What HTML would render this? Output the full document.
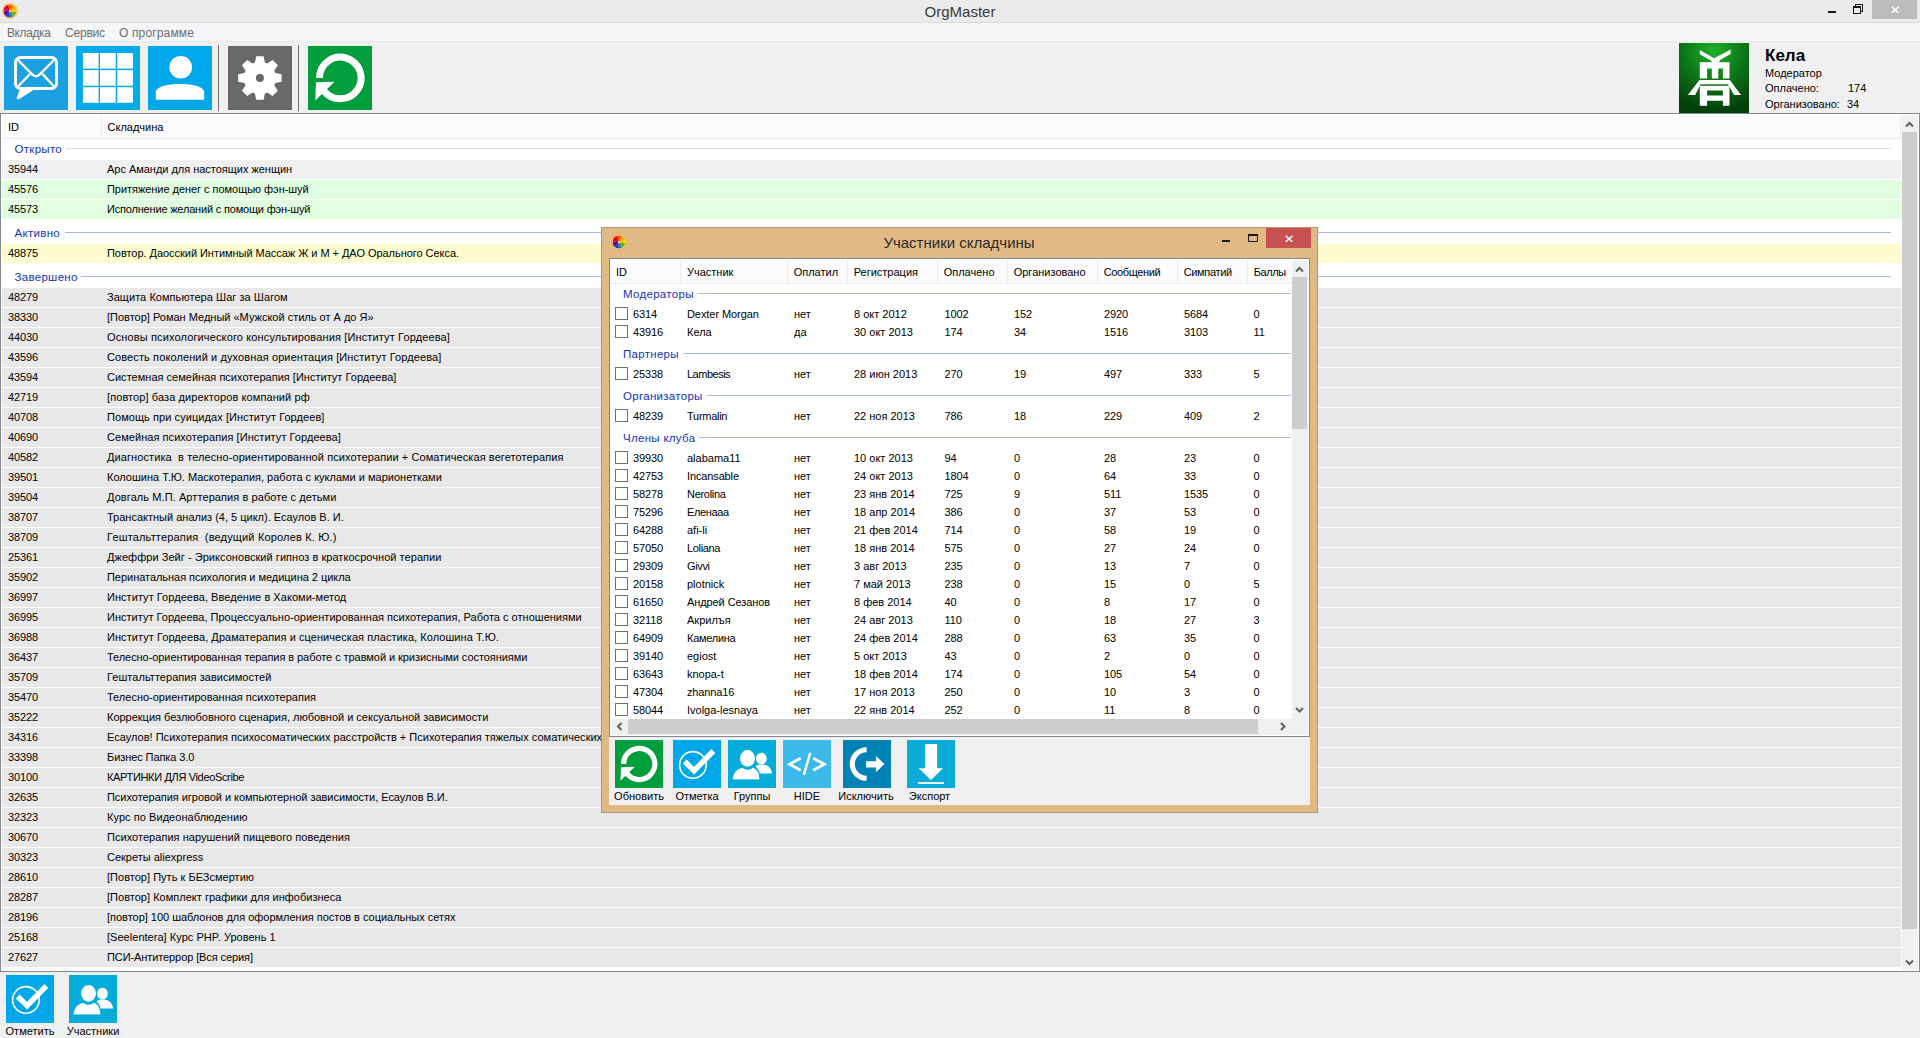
<!DOCTYPE html>
<html lang="ru"><head><meta charset="utf-8"><title>OrgMaster</title>
<style>
*{box-sizing:border-box;margin:0;padding:0}
html,body{width:1920px;height:1038px;overflow:hidden}
body{position:relative;background:#f0f0f0;font-family:"Liberation Sans",sans-serif;font-size:11px;color:#000;line-height:1}
div,span{position:absolute;white-space:pre}
svg.ic{position:absolute;left:0;top:0;display:block}
.tile{width:64px;height:64px}
.t48{width:48px;height:48px}
.lv{background:#fff;border:1px solid #828790;overflow:hidden}
.hd{background:#fcfcfc;border-bottom:1px solid #e3ebf6}
.hc{top:0;border-right:1px solid #e6edf8;line-height:23px;padding-top:1px}
.hc span{position:static}
.gl{color:#1233b8;line-height:14px;font-size:11.5px;letter-spacing:0.3px}
.gln{height:1px;background:#a9b9e0}
.r{left:1px;height:19px;line-height:19px}
.r span{top:0}
.n{letter-spacing:-0.12px}
.dr{left:1px;height:18px;line-height:18px}
.dr span{top:1px}
.cb{left:4px;top:3px;width:13px;height:13px;border:1px solid #707070;background:#fff}
.sb{background:#f0f0f0}
.th{background:#cdcdcd}
.lbl{line-height:13px;text-align:center}
</style></head>
<body>
<div id="titlebar" style="left:0;top:0;width:1920px;height:22px;background:#ebebeb"></div>
<div style="left:0;top:22px;width:1920px;height:1px;background:#dadada"></div>
<div style="left:2px;top:3px;width:16px;height:16px"><svg class="ic" width="16" height="16" viewBox="0 0 16 16"><circle cx="8" cy="8" r="7.7" fill="#fbab2a"/><circle cx="8" cy="8" r="6.9" fill="#fde6b0"/><path d="M8 8 L1.62 7.44 A6.4 6.4 0 0 1 6.34 1.82Z" fill="#e3051b"/><path d="M8 8 L6.34 1.82 A6.4 6.4 0 0 1 11.20 2.46Z" fill="#ff5a12"/><path d="M8 8 L11.20 2.46 A6.4 6.4 0 0 1 13.80 5.30Z" fill="#ffa200"/><path d="M8 8 L13.80 5.30 A6.4 6.4 0 0 1 14.26 9.33Z" fill="#f9d000"/><path d="M8 8 L14.26 9.33 A6.4 6.4 0 0 1 11.00 13.65Z" fill="#6fb21f"/><path d="M8 8 L11.00 13.65 A6.4 6.4 0 0 1 6.89 14.30Z" fill="#2f6fc4"/><path d="M8 8 L6.89 14.30 A6.4 6.4 0 0 1 3.89 12.90Z" fill="#0b44c6"/><path d="M8 8 L3.89 12.90 A6.4 6.4 0 0 1 1.62 7.44Z" fill="#5c0a98"/><circle cx="7.9" cy="8.2" r="1" fill="#fff6d0"/></svg></div>
<div id="title" style="left:860px;top:0;width:200px;height:22px;line-height:23px;text-align:center;font-size:15px;color:#3a3a3a">OrgMaster</div>
<div style="left:1828px;top:11px;width:8px;height:2px;background:#1a1a1a"></div>
<svg class="ic" style="left:1852px;top:3px" width="12" height="12" viewBox="0 0 12 12" fill="none" stroke="#1a1a1a" shape-rendering="crispEdges"><path d="M3.5 3 V1.5 H10.5 V8.5 H9" stroke-width="1"/><path d="M1.5 4 H8.5 V10.5 H1.5Z" stroke-width="1"/><path d="M1 4 H9" stroke-width="2"/></svg>
<div style="left:1872px;top:0;width:45px;height:19px;background:#bcbcbc"></div>
<svg class="ic" style="left:1890.6px;top:5.6px" width="8.4" height="7.8" viewBox="0 0 9 9" preserveAspectRatio="none"><path d="M0.8 0.8 L8.2 8.2 M8.2 0.8 L0.8 8.2" stroke="#fff" stroke-width="1.7"/></svg>
<div id="menubar" style="left:0;top:23px;width:1920px;height:18px;background:#f5f6f7"></div>
<div style="left:0;top:41px;width:1920px;height:1px;background:#e8e9ea"></div>
<div class="mi" style="left:7px;top:24px;line-height:18px;font-size:12px;letter-spacing:-0.40px;color:#6d6d6d">Вкладка</div>
<div class="mi" style="left:65px;top:24px;line-height:18px;font-size:12px;letter-spacing:-0.20px;color:#6d6d6d">Сервис</div>
<div class="mi" style="left:119px;top:24px;line-height:18px;font-size:12px;letter-spacing:0.15px;color:#6d6d6d">О программе</div>
<div class="tile" style="left:4px;top:46px;background:#1ba1e2"><svg class="ic" width="64" height="64" viewBox="0 0 64 64" fill="none" stroke="#fff" stroke-width="2.9" stroke-linejoin="round"><rect x="11.5" y="11.5" width="41" height="31" rx="5" ry="5"/><path d="M13.5 13.5 L28.5 28.6 Q32 32 35.5 28.6 L50.5 13.5" stroke-width="2.4"/><path d="M13.5 41 L26 28 M50.5 41 L38.5 28" stroke-width="2.4"/><path d="M16.5 43 L13.2 52 Q13 53.5 14.8 52.8 L29.5 43.5Z" fill="#fff" stroke-width="1"/></svg></div>
<div class="tile" style="left:76px;top:46px;background:#00aaeb"><svg class="ic" width="64" height="64" viewBox="0 0 64 64" fill="#fff"><rect x="6.9" y="7.0" width="15.7" height="15.6"/><rect x="24.0" y="7.0" width="15.7" height="15.6"/><rect x="41.2" y="7.0" width="15.7" height="15.6"/><rect x="6.9" y="24.1" width="15.7" height="15.6"/><rect x="24.0" y="24.1" width="15.7" height="15.6"/><rect x="41.2" y="24.1" width="15.7" height="15.6"/><rect x="6.9" y="41.2" width="15.7" height="15.6"/><rect x="24.0" y="41.2" width="15.7" height="15.6"/><rect x="41.2" y="41.2" width="15.7" height="15.6"/></svg></div>
<div class="tile" style="left:148px;top:46px;background:#00a8ea"><svg class="ic" width="64" height="64" viewBox="0 0 64 64" fill="#fff"><circle cx="32.7" cy="21.3" r="11.3"/><path d="M7.8 53.8 L7.8 45.5 C9 40.5 20 38.1 32 38.1 C44 38.1 55 40.5 56.2 45.5 L56.2 53.8Z"/></svg></div>
<div class="tile" style="left:228px;top:46px;background:#696969"><svg class="ic" width="64" height="64" viewBox="0 0 64 64"><path fill="#fff" fill-rule="evenodd" d="M26.96 16.57 L28.18 10.32 L35.62 10.32 L36.84 16.57 L39.31 17.60 L44.60 14.04 L49.86 19.30 L46.30 24.59 L47.33 27.06 L53.58 28.28 L53.58 35.72 L47.33 36.94 L46.30 39.41 L49.86 44.70 L44.60 49.96 L39.31 46.40 L36.84 47.43 L35.62 53.68 L28.18 53.68 L26.96 47.43 L24.49 46.40 L19.20 49.96 L13.94 44.70 L17.50 39.41 L16.47 36.94 L10.22 35.72 L10.22 28.28 L16.47 27.06 L17.50 24.59 L13.94 19.30 L19.20 14.04 L24.49 17.60Z M27.90 32.00 a4.00 4.00 0 1 0 8.00 0 a4.00 4.00 0 1 0 -8.00 0Z"/></svg></div>
<div class="tile" style="left:308px;top:46px;background:#009e3c"><svg class="ic" width="64" height="64" viewBox="0 0 64 64"><path d="M11.50 32.00 A20.80 20.80 0 1 1 16.02 44.95" fill="none" stroke="#fff" stroke-width="7"/><path d="M8 36.2 L26.5 35.8 L7.3 54.4Z" fill="#fff"/></svg></div>
<div style="left:218px;top:45px;width:1px;height:66px;background:#6e6e6e"></div>
<div style="left:298px;top:45px;width:1px;height:66px;background:#6e6e6e"></div>
<div style="left:1679px;top:43px;width:70px;height:70px"><svg class="ic" width="70" height="70" viewBox="0 0 70 70"><defs><radialGradient id="ag" cx="50%" cy="12%" r="85%"><stop offset="0" stop-color="#1eb02a"/><stop offset="0.45" stop-color="#0d7d1a"/><stop offset="1" stop-color="#04400b"/></radialGradient></defs><rect width="70" height="70" fill="url(#ag)"/><g fill="#fff"><path d="M20.8 6.9 L35 15.2 L51.6 6.6 L51.6 11 L40.5 17.2 L40.5 19.3 L50.5 19.3 L50.5 35.5 L43.9 35.5 L43.9 25.4 L39.3 25.4 L39.3 35.5 L32.8 35.5 L32.8 25.4 L28.1 25.4 L28.1 35.5 L20.8 35.5 L20.8 19.3 L32.6 19.3 L32.6 18 L20.8 11.2Z"/><path d="M20.4 37 L50.9 37 L62 52 L55.1 52 L49 41.2 L21.6 41.2 L16.2 52 L8.9 52Z"/><path fill-rule="evenodd" d="M20.8 42.8 H50.5 V62.8 H43.9 V57.8 H28.1 V62.8 H20.8Z M28.1 47.4 H43.9 V52.4 H28.1Z"/></g></svg></div>
<div id="uname" style="left:1765px;top:46px;font-size:17px;font-weight:bold;line-height:20px">Кела</div>
<div style="left:1765px;top:67px;line-height:13px">Модератор</div>
<div style="left:1765px;top:82px;line-height:13px">Оплачено:</div><div style="left:1848px;top:82px;line-height:13px">174</div>
<div style="left:1765px;top:98px;line-height:13px">Организовано:</div><div style="left:1847px;top:98px;line-height:13px">34</div>
<div id="mlist" class="lv" style="left:0;top:113px;width:1920px;height:859px">
<div class="hd" style="left:1px;top:1px;width:1899px;height:24px"><div class="hc" style="left:0;width:100px;height:23px;padding-left:6px">ID</div><div class="hc" style="left:100px;width:1799px;height:23px;padding-left:5.5px">Складчина</div></div>
<div class="gl" style="left:13.5px;top:27.5px">Открыто</div><div class="gln" style="left:65px;top:34px;width:1825px;background:#d6def0"></div>
<div class="r" style="top:46px;width:1899px;background:#f0f0f0"><span class="n" style="left:6px">35944</span><span style="left:105px;letter-spacing:-0.024px">Арс Аманди для настоящих женщин</span></div>
<div class="r" style="top:66px;width:1899px;background:#e1fee1"><span class="n" style="left:6px">45576</span><span style="left:105px;letter-spacing:-0.043px">Притяжение денег с помощью фэн-шуй</span></div>
<div class="r" style="top:86px;width:1899px;background:#e1fee1"><span class="n" style="left:6px">45573</span><span style="left:105px;letter-spacing:-0.187px">Исполнение желаний с помощи фэн-шуй</span></div>
<div class="gl" style="left:13.5px;top:111.5px">Активно</div><div class="gln" style="left:64px;top:118px;width:1826px"></div>
<div class="r" style="top:130px;width:1899px;background:#fffdd0"><span class="n" style="left:6px">48875</span><span style="left:105px;letter-spacing:-0.043px">Повтор. Даосский Интимный Массаж Ж и М + ДАО Орального Секса.</span></div>
<div class="gl" style="left:13.5px;top:155.5px">Завершено</div><div class="gln" style="left:80px;top:162px;width:1810px"></div>
<div class="r" style="top:174px;width:1899px;background:#e8e8e8"><span class="n" style="left:6px">48279</span><span style="left:105px;letter-spacing:0.048px">Защита Компьютера Шаг за Шагом</span></div>
<div class="r" style="top:194px;width:1899px;background:#e8e8e8"><span class="n" style="left:6px">38330</span><span style="left:105px">[Повтор] Роман Медный «Мужской стиль от А до Я»</span></div>
<div class="r" style="top:214px;width:1899px;background:#e8e8e8"><span class="n" style="left:6px">44030</span><span style="left:105px;letter-spacing:0.134px">Основы психологического консультирования [Институт Гордеева]</span></div>
<div class="r" style="top:234px;width:1899px;background:#e8e8e8"><span class="n" style="left:6px">43596</span><span style="left:105px;letter-spacing:0.110px">Совесть поколений и духовная ориентация [Институт Гордеева]</span></div>
<div class="r" style="top:254px;width:1899px;background:#e8e8e8"><span class="n" style="left:6px">43594</span><span style="left:105px;letter-spacing:0.018px">Системная семейная психотерапия [Институт Гордеева]</span></div>
<div class="r" style="top:274px;width:1899px;background:#e8e8e8"><span class="n" style="left:6px">42719</span><span style="left:105px;letter-spacing:0.093px">[повтор] база директоров компаний рф</span></div>
<div class="r" style="top:294px;width:1899px;background:#e8e8e8"><span class="n" style="left:6px">40708</span><span style="left:105px;letter-spacing:0.072px">Помощь при суицидах [Институт Гордеев]</span></div>
<div class="r" style="top:314px;width:1899px;background:#e8e8e8"><span class="n" style="left:6px">40690</span><span style="left:105px;letter-spacing:0.056px">Семейная психотерапия [Институт Гордеева]</span></div>
<div class="r" style="top:334px;width:1899px;background:#e8e8e8"><span class="n" style="left:6px">40582</span><span style="left:105px;letter-spacing:0.091px">Диагностика  в телесно-ориентированной психотерапии + Соматическая вегетотерапия</span></div>
<div class="r" style="top:354px;width:1899px;background:#e8e8e8"><span class="n" style="left:6px">39501</span><span style="left:105px">Колошина Т.Ю. Маскотерапия, работа с куклами и марионетками</span></div>
<div class="r" style="top:374px;width:1899px;background:#e8e8e8"><span class="n" style="left:6px">39504</span><span style="left:105px;letter-spacing:0.082px">Довгаль М.П. Арттерапия в работе с детьми</span></div>
<div class="r" style="top:394px;width:1899px;background:#e8e8e8"><span class="n" style="left:6px">38707</span><span style="left:105px">Трансактный анализ (4, 5 цикл). Есаулов В. И.</span></div>
<div class="r" style="top:414px;width:1899px;background:#e8e8e8"><span class="n" style="left:6px">38709</span><span style="left:105px;letter-spacing:0.168px">Гештальттерапия  (ведущий Королев К. Ю.)</span></div>
<div class="r" style="top:434px;width:1899px;background:#e8e8e8"><span class="n" style="left:6px">25361</span><span style="left:105px;letter-spacing:0.047px">Джеффри Зейг - Эриксоновский гипноз в краткосрочной терапии</span></div>
<div class="r" style="top:454px;width:1899px;background:#e8e8e8"><span class="n" style="left:6px">35902</span><span style="left:105px;letter-spacing:-0.038px">Перинатальная психология и медицина 2 цикла</span></div>
<div class="r" style="top:474px;width:1899px;background:#e8e8e8"><span class="n" style="left:6px">36997</span><span style="left:105px;letter-spacing:0.046px">Институт Гордеева, Введение в Хакоми-метод</span></div>
<div class="r" style="top:494px;width:1899px;background:#e8e8e8"><span class="n" style="left:6px">36995</span><span style="left:105px;letter-spacing:0.016px">Институт Гордеева, Процессуально-ориентированная психотерапия, Работа с отношениями</span></div>
<div class="r" style="top:514px;width:1899px;background:#e8e8e8"><span class="n" style="left:6px">36988</span><span style="left:105px;letter-spacing:0.060px">Институт Гордеева, Драматерапия и сценическая пластика, Колошина Т.Ю.</span></div>
<div class="r" style="top:534px;width:1899px;background:#e8e8e8"><span class="n" style="left:6px">36437</span><span style="left:105px;letter-spacing:-0.061px">Телесно-ориентированная терапия в работе с травмой и кризисными состояниями</span></div>
<div class="r" style="top:554px;width:1899px;background:#e8e8e8"><span class="n" style="left:6px">35709</span><span style="left:105px;letter-spacing:0.046px">Гештальттерапия зависимостей</span></div>
<div class="r" style="top:574px;width:1899px;background:#e8e8e8"><span class="n" style="left:6px">35470</span><span style="left:105px">Телесно-ориентированная психотерапия</span></div>
<div class="r" style="top:594px;width:1899px;background:#e8e8e8"><span class="n" style="left:6px">35222</span><span style="left:105px;letter-spacing:-0.015px">Коррекция безлюбовного сценария, любовной и сексуальной зависимости</span></div>
<div class="r" style="top:614px;width:1899px;background:#e8e8e8"><span class="n" style="left:6px">34316</span><span style="left:105px;letter-spacing:0.013px">Есаулов! Психотерапия психосоматических расстройств + Психотерапия тяжелых соматических заболеваний</span></div>
<div class="r" style="top:634px;width:1899px;background:#e8e8e8"><span class="n" style="left:6px">33398</span><span style="left:105px;letter-spacing:-0.084px">Бизнес Папка 3.0</span></div>
<div class="r" style="top:654px;width:1899px;background:#e8e8e8"><span class="n" style="left:6px">30100</span><span style="left:105px;letter-spacing:-0.344px">КАРТИНКИ ДЛЯ VideoScribe</span></div>
<div class="r" style="top:674px;width:1899px;background:#e8e8e8"><span class="n" style="left:6px">32635</span><span style="left:105px;letter-spacing:-0.035px">Психотерапия игровой и компьютерной зависимости, Есаулов В.И.</span></div>
<div class="r" style="top:694px;width:1899px;background:#e8e8e8"><span class="n" style="left:6px">32323</span><span style="left:105px;letter-spacing:0.057px">Курс по Видеонаблюдению</span></div>
<div class="r" style="top:714px;width:1899px;background:#e8e8e8"><span class="n" style="left:6px">30670</span><span style="left:105px;letter-spacing:0.036px">Психотерапия нарушений пищевого поведения</span></div>
<div class="r" style="top:734px;width:1899px;background:#e8e8e8"><span class="n" style="left:6px">30323</span><span style="left:105px">Секреты aliexpress</span></div>
<div class="r" style="top:754px;width:1899px;background:#e8e8e8"><span class="n" style="left:6px">28610</span><span style="left:105px;letter-spacing:0.024px">[Повтор] Путь к БЕЗсмертию</span></div>
<div class="r" style="top:774px;width:1899px;background:#e8e8e8"><span class="n" style="left:6px">28287</span><span style="left:105px;letter-spacing:0.021px">[Повтор] Комплект графики для инфобизнеса</span></div>
<div class="r" style="top:794px;width:1899px;background:#e8e8e8"><span class="n" style="left:6px">28196</span><span style="left:105px;letter-spacing:-0.020px">[повтор] 100 шаблонов для оформления постов в социальных сетях</span></div>
<div class="r" style="top:814px;width:1899px;background:#e8e8e8"><span class="n" style="left:6px">25168</span><span style="left:105px;letter-spacing:0.032px">[Seelentera] Курс PHP. Уровень 1</span></div>
<div class="r" style="top:834px;width:1899px;background:#e8e8e8"><span class="n" style="left:6px">27627</span><span style="left:105px;letter-spacing:-0.095px">ПСИ-Антитеррор [Вся серия]</span></div>
<div class="sb" style="left:1901px;top:1px;width:16px;height:855px"></div><div class="th" style="left:1901px;top:18px;width:15px;height:797px"></div><svg class="ic" style="left:0px;top:0px;overflow:visible" width="1" height="1"><path d="M-3.5 2 L0 -1.5 L3.5 2" fill="none" stroke="#606060" stroke-width="2" transform="translate(1908.5 10.5)"/></svg><svg class="ic" style="left:0px;top:0px;overflow:visible" width="1" height="1"><path d="M-3.5 -2 L0 1.5 L3.5 -2" fill="none" stroke="#606060" stroke-width="2" transform="translate(1908.5 848.5)"/></svg></div>
<div class="t48" style="left:6px;top:975px;background:#00a8ea"><svg class="ic" width="48" height="48" viewBox="0 0 48 48" fill="none" stroke="#fff"><circle cx="19.9" cy="24.95" r="13.3" stroke-width="1.6"/><path d="M11.7 21.5 L21.1 30.7 L40.3 11" stroke-width="5.4" stroke-linejoin="miter"/></svg></div><div class="lbl" style="left:-6px;top:1025px;width:72px">Отметить</div>
<div class="t48" style="left:69px;top:975px;background:#05acd9"><svg class="ic" width="48" height="48" viewBox="0 0 48 48" fill="#fff"><ellipse cx="33.4" cy="18.6" rx="5.4" ry="5.8"/><path d="M27.5 26.5 C29 25.2 31 24.6 33.4 24.6 C39 24.6 43 27 44 33 L44 33.4 L31.6 33.4 C31 30.5 29.5 28 27.5 26.5Z"/><ellipse cx="19.5" cy="18.35" rx="8.1" ry="9" stroke="#05acd9" stroke-width="1.2"/><path d="M4.2 39.9 C4.6 33 8 28.6 14.5 27.4 C16 28.6 17.6 29.2 19.6 29.2 C21.6 29.2 23.2 28.6 24.7 27.4 C29.5 28.6 31.6 33 32 39.9Z" stroke="#05acd9" stroke-width="1"/></svg></div><div class="lbl" style="left:57px;top:1025px;width:72px">Участники</div>
<div id="dlg" style="left:601px;top:227px;width:717px;height:586px;background:#e0b985;border:1px solid #b8966a"></div>
<div style="left:611px;top:234px;width:16px;height:16px"><svg class="ic" width="16" height="16" viewBox="0 0 16 16"><circle cx="8" cy="8" r="7.7" fill="#fbab2a"/><circle cx="8" cy="8" r="6.9" fill="#fde6b0"/><path d="M8 8 L1.62 7.44 A6.4 6.4 0 0 1 6.34 1.82Z" fill="#e3051b"/><path d="M8 8 L6.34 1.82 A6.4 6.4 0 0 1 11.20 2.46Z" fill="#ff5a12"/><path d="M8 8 L11.20 2.46 A6.4 6.4 0 0 1 13.80 5.30Z" fill="#ffa200"/><path d="M8 8 L13.80 5.30 A6.4 6.4 0 0 1 14.26 9.33Z" fill="#f9d000"/><path d="M8 8 L14.26 9.33 A6.4 6.4 0 0 1 11.00 13.65Z" fill="#6fb21f"/><path d="M8 8 L11.00 13.65 A6.4 6.4 0 0 1 6.89 14.30Z" fill="#2f6fc4"/><path d="M8 8 L6.89 14.30 A6.4 6.4 0 0 1 3.89 12.90Z" fill="#0b44c6"/><path d="M8 8 L3.89 12.90 A6.4 6.4 0 0 1 1.62 7.44Z" fill="#5c0a98"/><circle cx="7.9" cy="8.2" r="1" fill="#fff6d0"/></svg></div>
<div id="dtitle" style="left:759px;top:232px;width:400px;line-height:22px;text-align:center;font-size:15px;color:#2a2a2a">Участники складчины</div>
<div style="left:1222px;top:240px;width:8px;height:2px;background:#1a1a1a"></div>
<div style="left:1248px;top:234px;width:10px;height:8px;border:1px solid #1a1a1a;border-top-width:2px"></div>
<div style="left:1266px;top:228px;width:45px;height:20px;background:#c75050"></div>
<svg class="ic" style="left:1284.9px;top:234.7px" width="8.2" height="7.6" viewBox="0 0 9 9" preserveAspectRatio="none"><path d="M0.8 0.8 L8.2 8.2 M8.2 0.8 L0.8 8.2" stroke="#fff" stroke-width="1.7"/></svg>
<div id="dclient" style="left:609px;top:258px;width:701px;height:547px;background:#f0f0f0"></div>
<div id="dlist" class="lv" style="left:609px;top:258px;width:701px;height:479px">
<div class="hd" style="left:1px;top:1px;width:681px;height:24px"><div class="hc" style="left:0px;width:70px;height:23px;padding-left:5.0px">ID</div><div class="hc" style="left:70px;width:107px;height:23px;padding-left:6.0px">Участник</div><div class="hc" style="left:177px;width:60px;height:23px;padding-left:5.7px">Оплатил</div><div class="hc" style="left:237px;width:90px;height:23px;padding-left:5.7px">Регистрация</div><div class="hc" style="left:327px;width:70px;height:23px;padding-left:5.7px">Оплачено</div><div class="hc" style="left:397px;width:90px;height:23px;padding-left:5.7px">Организовано</div><div class="hc" style="left:487px;width:80px;height:23px;padding-left:5.7px;letter-spacing:-0.38px">Сообщений</div><div class="hc" style="left:567px;width:70px;height:23px;padding-left:5.7px;letter-spacing:-0.33px">Симпатий</div><div class="hc" style="left:637px;width:44px;height:23px;padding-left:5.7px;border-right:0;letter-spacing:-0.4px">Баллы</div></div>
<div class="gl" style="left:13px;top:27.5px">Модераторы</div><div class="gln" style="left:88px;top:34px;width:593px"></div>
<div class="dr" style="top:45px;width:681px"><div class="cb"></div><span class="n" style="left:22.0px">6314</span><span style="left:76.0px;letter-spacing:-0.07px">Dexter Morgan</span><span style="left:183.0px">нет</span><span style="left:243.0px">8 окт 2012</span><span class="n" style="left:333.5px">1002</span><span class="n" style="left:403.0px">152</span><span class="n" style="left:493.0px">2920</span><span class="n" style="left:573.0px">5684</span><span class="n" style="left:642.5px">0</span></div>
<div class="dr" style="top:63px;width:681px"><div class="cb"></div><span class="n" style="left:22.0px">43916</span><span style="left:76.0px">Кела</span><span style="left:183.0px">да</span><span style="left:243.0px">30 окт 2013</span><span class="n" style="left:333.5px">174</span><span class="n" style="left:403.0px">34</span><span class="n" style="left:493.0px">1516</span><span class="n" style="left:573.0px">3103</span><span class="n" style="left:642.5px">11</span></div>
<div class="gl" style="left:13px;top:87.5px">Партнеры</div><div class="gln" style="left:73px;top:94px;width:608px"></div>
<div class="dr" style="top:105px;width:681px"><div class="cb"></div><span class="n" style="left:22.0px">25338</span><span style="left:76.0px;letter-spacing:-0.50px">Lambesis</span><span style="left:183.0px">нет</span><span style="left:243.0px">28 июн 2013</span><span class="n" style="left:333.5px">270</span><span class="n" style="left:403.0px">19</span><span class="n" style="left:493.0px">497</span><span class="n" style="left:573.0px">333</span><span class="n" style="left:642.5px">5</span></div>
<div class="gl" style="left:13px;top:129.5px">Организаторы</div><div class="gln" style="left:97px;top:136px;width:584px"></div>
<div class="dr" style="top:147px;width:681px"><div class="cb"></div><span class="n" style="left:22.0px">48239</span><span style="left:76.0px;letter-spacing:-0.27px">Turmalin</span><span style="left:183.0px">нет</span><span style="left:243.0px">22 ноя 2013</span><span class="n" style="left:333.5px">786</span><span class="n" style="left:403.0px">18</span><span class="n" style="left:493.0px">229</span><span class="n" style="left:573.0px">409</span><span class="n" style="left:642.5px">2</span></div>
<div class="gl" style="left:13px;top:171.5px">Члены клуба</div><div class="gln" style="left:89px;top:178px;width:592px"></div>
<div class="dr" style="top:189px;width:681px"><div class="cb"></div><span class="n" style="left:22.0px">39930</span><span style="left:76.0px">alabama11</span><span style="left:183.0px">нет</span><span style="left:243.0px">10 окт 2013</span><span class="n" style="left:333.5px">94</span><span class="n" style="left:403.0px">0</span><span class="n" style="left:493.0px">28</span><span class="n" style="left:573.0px">23</span><span class="n" style="left:642.5px">0</span></div>
<div class="dr" style="top:207px;width:681px"><div class="cb"></div><span class="n" style="left:22.0px">42753</span><span style="left:76.0px;letter-spacing:-0.13px">Incansable</span><span style="left:183.0px">нет</span><span style="left:243.0px">24 окт 2013</span><span class="n" style="left:333.5px">1804</span><span class="n" style="left:403.0px">0</span><span class="n" style="left:493.0px">64</span><span class="n" style="left:573.0px">33</span><span class="n" style="left:642.5px">0</span></div>
<div class="dr" style="top:225px;width:681px"><div class="cb"></div><span class="n" style="left:22.0px">58278</span><span style="left:76.0px;letter-spacing:-0.30px">Nerolina</span><span style="left:183.0px">нет</span><span style="left:243.0px">23 янв 2014</span><span class="n" style="left:333.5px">725</span><span class="n" style="left:403.0px">9</span><span class="n" style="left:493.0px">511</span><span class="n" style="left:573.0px">1535</span><span class="n" style="left:642.5px">0</span></div>
<div class="dr" style="top:243px;width:681px"><div class="cb"></div><span class="n" style="left:22.0px">75296</span><span style="left:76.0px;letter-spacing:-0.35px">Еленааа</span><span style="left:183.0px">нет</span><span style="left:243.0px">18 апр 2014</span><span class="n" style="left:333.5px">386</span><span class="n" style="left:403.0px">0</span><span class="n" style="left:493.0px">37</span><span class="n" style="left:573.0px">53</span><span class="n" style="left:642.5px">0</span></div>
<div class="dr" style="top:261px;width:681px"><div class="cb"></div><span class="n" style="left:22.0px">64288</span><span style="left:76.0px">afi-li</span><span style="left:183.0px">нет</span><span style="left:243.0px">21 фев 2014</span><span class="n" style="left:333.5px">714</span><span class="n" style="left:403.0px">0</span><span class="n" style="left:493.0px">58</span><span class="n" style="left:573.0px">19</span><span class="n" style="left:642.5px">0</span></div>
<div class="dr" style="top:279px;width:681px"><div class="cb"></div><span class="n" style="left:22.0px">57050</span><span style="left:76.0px;letter-spacing:-0.35px">Loliana</span><span style="left:183.0px">нет</span><span style="left:243.0px">18 янв 2014</span><span class="n" style="left:333.5px">575</span><span class="n" style="left:403.0px">0</span><span class="n" style="left:493.0px">27</span><span class="n" style="left:573.0px">24</span><span class="n" style="left:642.5px">0</span></div>
<div class="dr" style="top:297px;width:681px"><div class="cb"></div><span class="n" style="left:22.0px">29309</span><span style="left:76.0px;letter-spacing:-0.35px">Givvi</span><span style="left:183.0px">нет</span><span style="left:243.0px">3 авг 2013</span><span class="n" style="left:333.5px">235</span><span class="n" style="left:403.0px">0</span><span class="n" style="left:493.0px">13</span><span class="n" style="left:573.0px">7</span><span class="n" style="left:642.5px">0</span></div>
<div class="dr" style="top:315px;width:681px"><div class="cb"></div><span class="n" style="left:22.0px">20158</span><span style="left:76.0px">plotnick</span><span style="left:183.0px">нет</span><span style="left:243.0px">7 май 2013</span><span class="n" style="left:333.5px">238</span><span class="n" style="left:403.0px">0</span><span class="n" style="left:493.0px">15</span><span class="n" style="left:573.0px">0</span><span class="n" style="left:642.5px">5</span></div>
<div class="dr" style="top:333px;width:681px"><div class="cb"></div><span class="n" style="left:22.0px">61650</span><span style="left:76.0px;letter-spacing:-0.09px">Андрей Сезанов</span><span style="left:183.0px">нет</span><span style="left:243.0px">8 фев 2014</span><span class="n" style="left:333.5px">40</span><span class="n" style="left:403.0px">0</span><span class="n" style="left:493.0px">8</span><span class="n" style="left:573.0px">17</span><span class="n" style="left:642.5px">0</span></div>
<div class="dr" style="top:351px;width:681px"><div class="cb"></div><span class="n" style="left:22.0px">32118</span><span style="left:76.0px">Акрилъя</span><span style="left:183.0px">нет</span><span style="left:243.0px">24 авг 2013</span><span class="n" style="left:333.5px">110</span><span class="n" style="left:403.0px">0</span><span class="n" style="left:493.0px">18</span><span class="n" style="left:573.0px">27</span><span class="n" style="left:642.5px">3</span></div>
<div class="dr" style="top:369px;width:681px"><div class="cb"></div><span class="n" style="left:22.0px">64909</span><span style="left:76.0px;letter-spacing:-0.27px">Камелина</span><span style="left:183.0px">нет</span><span style="left:243.0px">24 фев 2014</span><span class="n" style="left:333.5px">288</span><span class="n" style="left:403.0px">0</span><span class="n" style="left:493.0px">63</span><span class="n" style="left:573.0px">35</span><span class="n" style="left:642.5px">0</span></div>
<div class="dr" style="top:387px;width:681px"><div class="cb"></div><span class="n" style="left:22.0px">39140</span><span style="left:76.0px">egiost</span><span style="left:183.0px">нет</span><span style="left:243.0px">5 окт 2013</span><span class="n" style="left:333.5px">43</span><span class="n" style="left:403.0px">0</span><span class="n" style="left:493.0px">2</span><span class="n" style="left:573.0px">0</span><span class="n" style="left:642.5px">0</span></div>
<div class="dr" style="top:405px;width:681px"><div class="cb"></div><span class="n" style="left:22.0px">63643</span><span style="left:76.0px">knopa-t</span><span style="left:183.0px">нет</span><span style="left:243.0px">18 фев 2014</span><span class="n" style="left:333.5px">174</span><span class="n" style="left:403.0px">0</span><span class="n" style="left:493.0px">105</span><span class="n" style="left:573.0px">54</span><span class="n" style="left:642.5px">0</span></div>
<div class="dr" style="top:423px;width:681px"><div class="cb"></div><span class="n" style="left:22.0px">47304</span><span style="left:76.0px;letter-spacing:-0.15px">zhanna16</span><span style="left:183.0px">нет</span><span style="left:243.0px">17 ноя 2013</span><span class="n" style="left:333.5px">250</span><span class="n" style="left:403.0px">0</span><span class="n" style="left:493.0px">10</span><span class="n" style="left:573.0px">3</span><span class="n" style="left:642.5px">0</span></div>
<div class="dr" style="top:441px;width:681px"><div class="cb"></div><span class="n" style="left:22.0px">58044</span><span style="left:76.0px">Ivolga-lesnaya</span><span style="left:183.0px">нет</span><span style="left:243.0px">22 янв 2014</span><span class="n" style="left:333.5px">252</span><span class="n" style="left:403.0px">0</span><span class="n" style="left:493.0px">11</span><span class="n" style="left:573.0px">8</span><span class="n" style="left:642.5px">0</span></div>
<div class="sb" style="left:682px;top:1px;width:16px;height:459px"></div><div class="th" style="left:682px;top:18px;width:15px;height:152px"></div><svg class="ic" style="left:0px;top:0px;overflow:visible" width="1" height="1"><path d="M-3.5 2 L0 -1.5 L3.5 2" fill="none" stroke="#606060" stroke-width="2" transform="translate(689.5 10.5)"/></svg><svg class="ic" style="left:0px;top:0px;overflow:visible" width="1" height="1"><path d="M-3.5 -2 L0 1.5 L3.5 -2" fill="none" stroke="#606060" stroke-width="2" transform="translate(689.5 451.0)"/></svg><div class="sb" style="left:1px;top:460px;width:697px;height:16px"></div><div class="th" style="left:18px;top:460px;width:630px;height:15px"></div><svg class="ic" style="left:0px;top:0px;overflow:visible" width="1" height="1"><path d="M2 -3.5 L-1.5 0 L2 3.5" fill="none" stroke="#606060" stroke-width="2" transform="translate(9.5 467.5)"/></svg><svg class="ic" style="left:0px;top:0px;overflow:visible" width="1" height="1"><path d="M-2 -3.5 L1.5 0 L-2 3.5" fill="none" stroke="#606060" stroke-width="2" transform="translate(673.0 467.5)"/></svg></div>
<div class="t48" style="left:615px;top:740px;background:#009e3c"><svg class="ic" width="48" height="48" viewBox="0 0 64 64"><path d="M11.50 32.00 A20.80 20.80 0 1 1 16.02 44.95" fill="none" stroke="#fff" stroke-width="7"/><path d="M8 36.2 L26.5 35.8 L7.3 54.4Z" fill="#fff"/></svg></div><div class="lbl" style="left:599.0px;top:790px;width:80px">Обновить</div>
<div class="t48" style="left:673px;top:740px;background:#00a8ea"><svg class="ic" width="48" height="48" viewBox="0 0 48 48" fill="none" stroke="#fff"><circle cx="19.9" cy="24.95" r="13.3" stroke-width="1.6"/><path d="M11.7 21.5 L21.1 30.7 L40.3 11" stroke-width="5.4" stroke-linejoin="miter"/></svg></div><div class="lbl" style="left:657.0px;top:790px;width:80px">Отметка</div>
<div class="t48" style="left:728px;top:740px;background:#05acd9"><svg class="ic" width="48" height="48" viewBox="0 0 48 48" fill="#fff"><ellipse cx="33.4" cy="18.6" rx="5.4" ry="5.8"/><path d="M27.5 26.5 C29 25.2 31 24.6 33.4 24.6 C39 24.6 43 27 44 33 L44 33.4 L31.6 33.4 C31 30.5 29.5 28 27.5 26.5Z"/><ellipse cx="19.5" cy="18.35" rx="8.1" ry="9" stroke="#05acd9" stroke-width="1.2"/><path d="M4.2 39.9 C4.6 33 8 28.6 14.5 27.4 C16 28.6 17.6 29.2 19.6 29.2 C21.6 29.2 23.2 28.6 24.7 27.4 C29.5 28.6 31.6 33 32 39.9Z" stroke="#05acd9" stroke-width="1"/></svg></div><div class="lbl" style="left:712.0px;top:790px;width:80px">Группы</div>
<div class="t48" style="left:783px;top:740px;background:#3bb9e9"><svg class="ic" width="48" height="48" viewBox="0 0 48 48" fill="none" stroke="#fff" stroke-width="2.7"><path d="M17.6 18.2 L6.6 24.2 L17.6 30.2"/><path d="M30.2 18.2 L41.4 24.2 L30.2 30.2"/><path d="M27.3 12.9 L20.8 34.9" stroke-width="2.4"/></svg></div><div class="lbl" style="left:767.0px;top:790px;width:80px">HIDE</div>
<div class="t48" style="left:843px;top:740px;background:#0082b6"><svg class="ic" width="48" height="48" viewBox="0 0 48 48"><path d="M23.6 9.7 A14.3 14.3 0 0 0 23.6 38.3" fill="none" stroke="#fff" stroke-width="5.1"/><path d="M23.1 21.2 H32.9 V16 L41.5 24.1 L32.9 32.2 V27.4 H23.1Z" fill="#fff"/></svg></div><div class="lbl" style="left:826.0px;top:790px;width:80px">Исключить</div>
<div class="t48" style="left:907px;top:740px;background:#0babda"><svg class="ic" width="48" height="48" viewBox="0 0 48 48" fill="#fff"><path d="M18 4 H30.1 V28.3 H36 L24 40 L11.6 28.3 H18Z"/><rect x="11.1" y="42.1" width="25.8" height="1.9"/></svg></div><div class="lbl" style="left:889.5px;top:790px;width:80px">Экспорт</div>
</body></html>
